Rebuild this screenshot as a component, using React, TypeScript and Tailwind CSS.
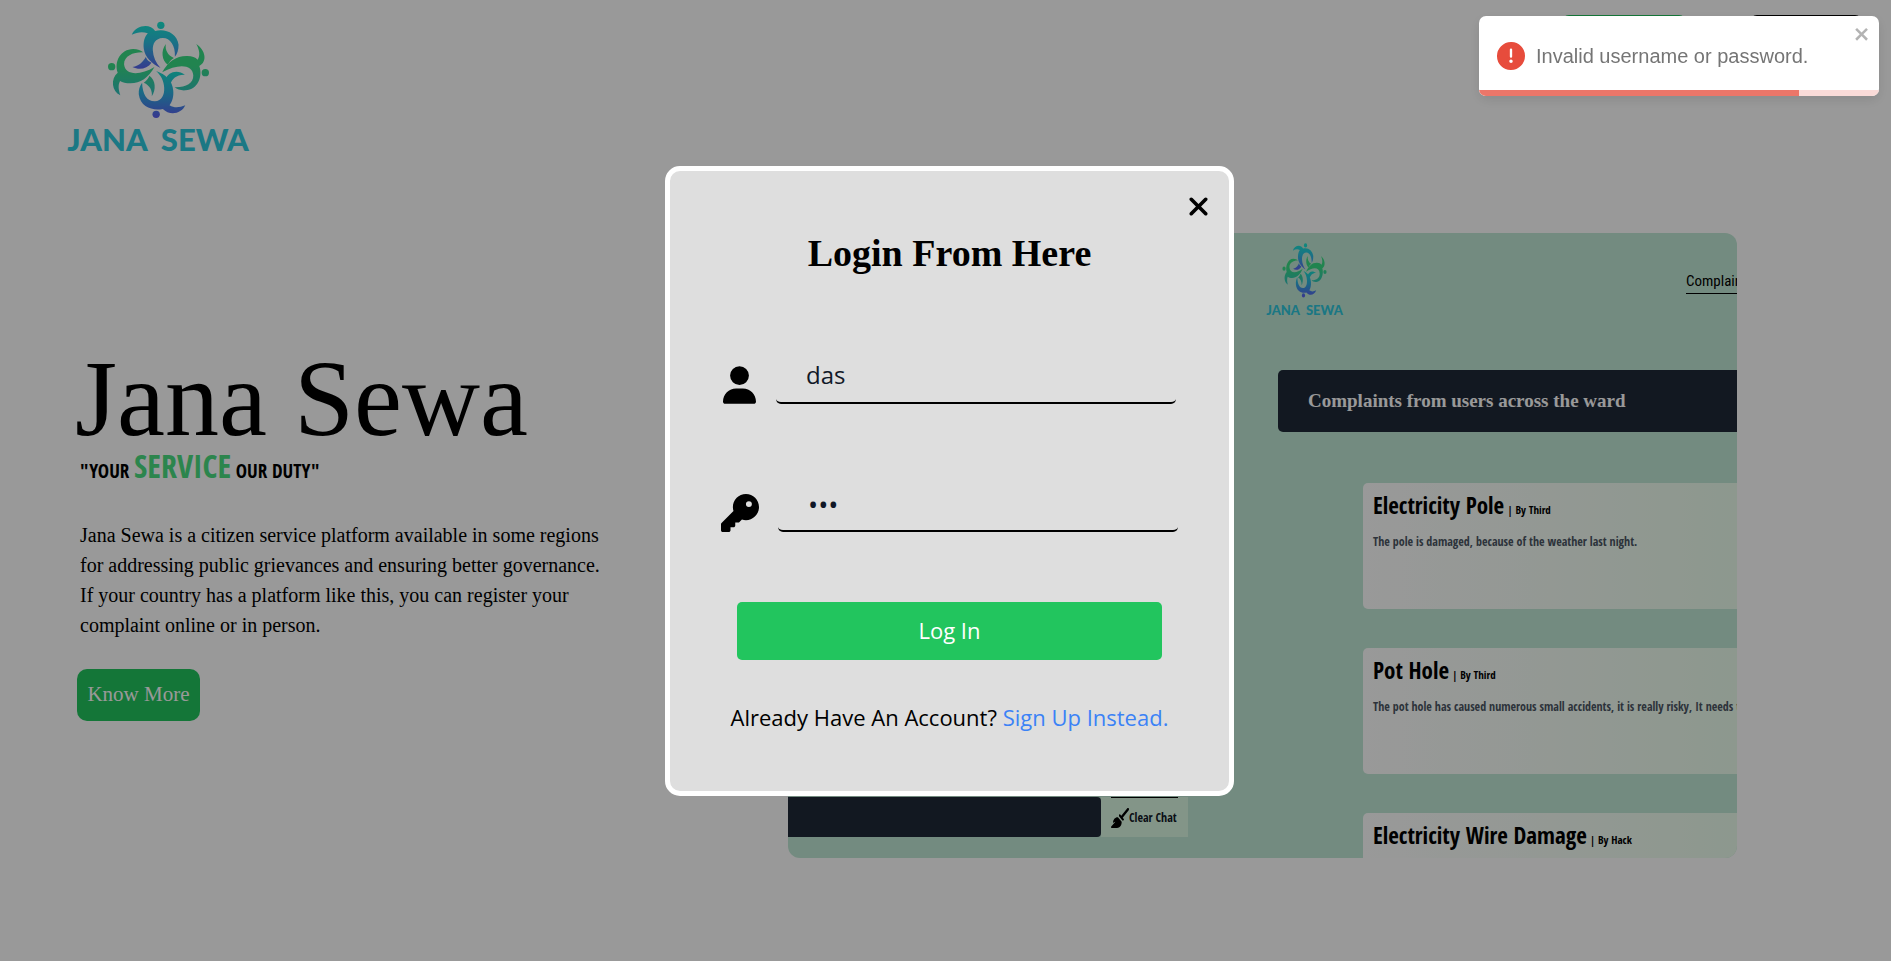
import { useId, useState } from "react";
import { FaBroom, FaKey, FaUser, FaXmark } from "react-icons/fa6";

const complaints = [
  { title: "Electricity Pole", author: "Third", text: "The pole is damaged, because of the weather last night." },
  {
    title: "Pot Hole",
    author: "Third",
    text: "The pot hole has caused numerous small accidents, it is really risky, It needs to be fixed soon.",
  },
  { title: "Electricity Wire Damage", author: "Hack", text: "" },
];

function Emblem({ className }: { className: string }) {
  const id = useId();
  const top = `${id}-top`;
  const side = `${id}-side`;
  const bottom = `${id}-bottom`;
  return (
    <svg viewBox="170 62 308 294" preserveAspectRatio="none" className={className} aria-hidden="true">
      <defs>
        <linearGradient id={top} gradientUnits="userSpaceOnUse" x1="0" y1="65" x2="0" y2="205">
          <stop offset="0" stopColor="#17e6cf" />
          <stop offset="0.45" stopColor="#2bbde0" />
          <stop offset="1" stopColor="#5a63ee" />
        </linearGradient>
        <linearGradient id={side} gradientUnits="userSpaceOnUse" x1="0" y1="135" x2="0" y2="285">
          <stop offset="0" stopColor="#38dc84" />
          <stop offset="0.4" stopColor="#38dc84" />
          <stop offset="1" stopColor="#30bfc0" />
        </linearGradient>
        <linearGradient id={bottom} gradientUnits="userSpaceOnUse" x1="0" y1="212" x2="0" y2="350">
          <stop offset="0" stopColor="#17dccb" />
          <stop offset="0.45" stopColor="#2bb2de" />
          <stop offset="1" stopColor="#5a5fee" />
        </linearGradient>
      </defs>
      <g fill={`url(#${top})`}>
        <circle cx="331" cy="75" r="11" />
        <path d="M244 103C255 76 298 67 314 92C342 83 380 98 384 133C384 150 380 160 373 169C375 135 358 112 336 113C315 114 306 130 307 150C308 170 316 188 330 203C305 190 283 170 280 145C278 125 282 110 292 99C275 93 260 96 244 103Z" />
        <path d="M246 200C268 196 278 184 286 170C290 180 296 184 303 187C290 206 266 210 246 200Z" />
      </g>
      <g fill={`url(#${side})`}>
        <circle cx="464" cy="217" r="11" />
        <path d="M437 131C465 150 471 184 446 197C457 228 442 268 405 270C390 271 380 267 372 261C405 262 429 250 428 225C426 190 380 190 335 216C352 184 378 166 410 167C425 167 434 171 441 178C450 165 446 148 437 131Z" />
        <path d="M346 131C330 151 334 181 352 193C357 183 362 178 370 173C351 165 343 148 346 131Z" />
        <circle cx="184" cy="199" r="11" />
        <path d="M210 285C184 272 180 236 202 217C191 184 210 147 248 146C262 146 272 150 278 156C250 155 221 166 221 192C224 226 270 226 312 200C294 232 270 249 240 249C227 249 216 246 209 242C202 255 205 270 210 285Z" />
        <path d="M304 288C317 268 316 240 297 226C292 236 288 241 280 247C298 255 306 270 304 288Z" />
      </g>
      <g fill={`url(#${bottom})`}>
        <circle cx="317" cy="342" r="11" />
        <path d="M404 315C393 341 357 347 337 326C308 332 270 322 265 282C264 268 268 256 275 247C276 280 288 303 313 303C334 301 342 284 341 262C340 242 332 226 317 212C345 222 366 242 368 270C370 290 365 303 357 315C372 324 387 322 404 315Z" />
        <path d="M403 223C382 207 352 213 345 238C352 243 356 247 360 251C364 236 378 222 403 223Z" />
      </g>
    </svg>
  );
}

function Preview() {
  return (
    <div
      aria-label="Preview of the complaints board"
      className="flex h-[625px] w-[949px] shrink overflow-hidden rounded-[12px] bg-[#c0e8d5] font-['Open_Sans_Condensed','Open_Sans',sans-serif]"
    >
      <div className="flex w-[400px] shrink-0 flex-col justify-end pb-[21px]">
        <div className="flex h-[40px]">
          <div className="grow rounded-r-[4px] bg-[#1f2937]" />
          <div className="flex w-[87px] flex-col bg-[#dbf8e3] px-[10px]">
            <div className="h-px bg-black" />
            <div className="flex grow items-center text-[12px] font-bold text-[#111827]">
              <FaBroom preserveAspectRatio="none" className="h-[20px] w-[18px] shrink-0 text-black" />
              <span className="whitespace-nowrap">Clear Chat</span>
            </div>
          </div>
        </div>
      </div>
      <div className="flex min-w-0 grow flex-col overflow-hidden pl-[76px]">
        <div className="flex items-start justify-between pt-[10px]">
          <div className="flex w-[81px] flex-col items-center">
            <Emblem className="h-[55px] w-[45px]" />
            <span className="mt-[4px] flex gap-[6px] font-['Lato',sans-serif] text-[13px] leading-[16px] font-black text-[#2dc6dc]">
              <span>JANA</span> <span>SEWA</span>
            </span>
          </div>
          <div className="mt-[25px] w-[51px]">
            <span className="inline-block border-b border-black font-['Roboto_Condensed',sans-serif] text-[15px] leading-[24px] whitespace-nowrap text-black">
              Complaints
            </span>
          </div>
        </div>
        <div className="mt-[52px] ml-[14px] flex h-[62px] shrink-0 items-center rounded-l-[5px] bg-[#1f2937] pl-[30px]">
          <h2 className="font-['Liberation_Serif',serif] text-[19px] font-bold whitespace-nowrap text-white">
            Complaints from users across the ward
          </h2>
        </div>
        <div className="mt-[51px] ml-[99px] flex flex-col gap-[39px]">
          {complaints.map((c) => (
            <article
              key={c.title}
              className="h-[126px] shrink-0 rounded-l-[5px] bg-linear-to-r from-white to-[#ebfded] pt-[6px] pl-[10px] whitespace-nowrap"
            >
              <h3 className="text-[23px] leading-[32px] font-bold text-black">
                {c.title}
                <span className="ml-[3px] text-[11px]">| By {c.author}</span>
              </h3>
              <p className="mt-[7px] text-[12px] leading-[18px] font-bold text-[#4b5563]">{c.text}</p>
            </article>
          ))}
        </div>
      </div>
    </div>
  );
}

function LoginDialog() {
  const [name, setName] = useState("das");
  const [password, setPassword] = useState("das");
  return (
    <div className="fixed inset-0 flex items-center justify-center bg-black/40 pl-[8px]">
      <form
        role="dialog"
        aria-labelledby="login-title"
        onSubmit={(e) => e.preventDefault()}
        className="flex h-[630px] w-[569px] flex-col rounded-[15px] border-[5px] border-white bg-[#dedede] px-[53px] font-['Open_Sans',sans-serif]"
      >
        <button type="button" aria-label="Close" className="-mr-[37px] mt-[21px] self-end text-black">
          <FaXmark className="size-[29px]" />
        </button>
        <h2
          id="login-title"
          className="mt-[8px] text-center font-['Liberation_Serif',serif] text-[38px] leading-[48px] font-bold text-black"
        >
          Login From Here
        </h2>
        <div className="mt-[71px] flex items-end gap-[20px]">
          <label htmlFor="username" aria-label="Username" className="flex w-[33px] shrink-0">
            <FaUser className="h-[38px] w-[33px]" />
          </label>
          <input
            id="username"
            type="text"
            value={name}
            onChange={(e) => setName(e.target.value)}
            className="h-[56px] w-[400px] shrink-0 rounded-[5px] border-b-2 border-black bg-transparent px-[30px] text-[24px] text-[#111827] outline-none"
          />
        </div>
        <div className="mt-[72px] flex items-end gap-[19px]">
          <label htmlFor="password" aria-label="Password" className="-ml-[2px] flex w-[38px] shrink-0">
            <FaKey className="size-[38px]" />
          </label>
          <input
            id="password"
            type="password"
            value={password}
            onChange={(e) => setPassword(e.target.value)}
            className="h-[56px] w-[400px] shrink-0 rounded-[5px] border-b-2 border-black bg-transparent px-[30px] pt-[4px] text-[27px] text-[#111827] outline-none"
          />
        </div>
        <button
          type="submit"
          className="mt-[70px] h-[58px] w-[425px] self-center rounded-[5px] bg-[#22c55e] text-[22px] text-white"
        >
          Log In
        </button>
        <p className="mt-[41px] text-center text-[22px] leading-[32px] whitespace-nowrap text-black">
          Already Have An Account?{" "}
          <a href="#signup" className="text-[#3b82f6]">
            Sign Up Instead.
          </a>
        </p>
      </form>
    </div>
  );
}

function Toast() {
  return (
    <div
      role="alert"
      className="fixed top-[16px] right-[12px] flex h-[80px] w-[400px] flex-col overflow-hidden rounded-[7px] bg-white font-['Liberation_Sans',sans-serif] shadow-[0_4px_12px_rgba(0,0,0,0.1)]"
    >
      <div className="flex grow items-center pt-[5px] pl-[18px]">
        <svg viewBox="0 0 24 24" className="size-[28px] shrink-0 fill-[#e74c3c]" aria-hidden="true">
          <path d="M11.983 0a12.206 12.206 0 00-8.51 3.653A11.8 11.8 0 000 12.207 11.779 11.779 0 0011.8 24h.214A12.111 12.111 0 0024 11.791 11.766 11.766 0 0011.983 0zM10.5 16.542a1.476 1.476 0 011.449-1.53h.027a1.527 1.527 0 011.523 1.47 1.475 1.475 0 01-1.449 1.53h-.027a1.529 1.529 0 01-1.523-1.47zM11 12.5v-6a1 1 0 012 0v6a1 1 0 11-2 0z" />
        </svg>
        <span className="ml-[11px] text-[20px] text-[#757575]">Invalid username or password.</span>
        <button type="button" aria-label="Dismiss" className="mr-[8px] mb-auto ml-auto pt-[3px]">
          <svg viewBox="0 0 14 16" className="h-[20px] w-[17px] fill-[#b3b3b3]" aria-hidden="true">
            <path
              fillRule="evenodd"
              d="M7.71 8.23l3.75 3.75-1.48 1.48-3.75-3.75-3.75 3.75L1 11.98l3.75-3.75L1 4.48 2.48 3l3.75 3.75L9.98 3l1.48 1.48-3.75 3.75z"
            />
          </svg>
        </button>
      </div>
      <div className="h-[6px] shrink-0 bg-[#fadbd8]">
        <div className="h-full w-4/5 bg-[#ec7669]" />
      </div>
    </div>
  );
}

export default function App() {
  return (
    <div className="min-h-screen overflow-hidden bg-white font-['Liberation_Serif',serif] text-black">
      <header className="flex h-[233px] items-start justify-between pr-[29px] pl-[65px]">
        <a href="#home" className="flex w-[186px] flex-col items-center pt-[21px]">
          <Emblem className="h-[98px] w-[103px]" />
          <span className="mt-[2px] flex gap-[13px] font-['Lato',sans-serif] text-[31px] leading-[36px] font-black text-[#2dc8dc]">
            <span>JANA</span> <span>SEWA</span>
          </span>
        </a>
        <nav className="flex gap-[64px] pt-[15px]">
          <a href="#register" className="h-[50px] w-[124px] rounded-[7px] bg-[#22c55e]" aria-label="Register" />
          <a href="#login" className="h-[50px] w-[112px] rounded-[7px] bg-black" aria-label="Login" />
        </nav>
      </header>
      <main className="flex items-start justify-between gap-8 pr-[154px] pl-[75px]">
        <section className="w-[540px] shrink-0 pt-[106px]">
          <h1 className="text-[108px] leading-[120px] whitespace-nowrap">Jana Sewa</h1>
          <p className="-mt-[11px] pl-[5px] font-['Open_Sans_Condensed','Roboto_Condensed',sans-serif] text-[19px] leading-[36px] font-bold whitespace-nowrap">
            "YOUR <span className="text-[32px] text-[#4ade80]">SERVICE</span> OUR DUTY"
          </p>
          <p className="mt-[31px] pl-[5px] text-[20px] leading-[30px]">
            Jana Sewa is a citizen service platform available in some regions for addressing public grievances and
            ensuring better governance. If your country has a platform like this, you can register your complaint
            online or in person.
          </p>
          <button
            type="button"
            className="mt-[29px] ml-[2px] h-[52px] w-[123px] rounded-[10px] bg-[#22c55e] text-[21px] text-white"
          >
            Know More
          </button>
        </section>
        <Preview />
      </main>
      <LoginDialog />
      <Toast />
    </div>
  );
}
